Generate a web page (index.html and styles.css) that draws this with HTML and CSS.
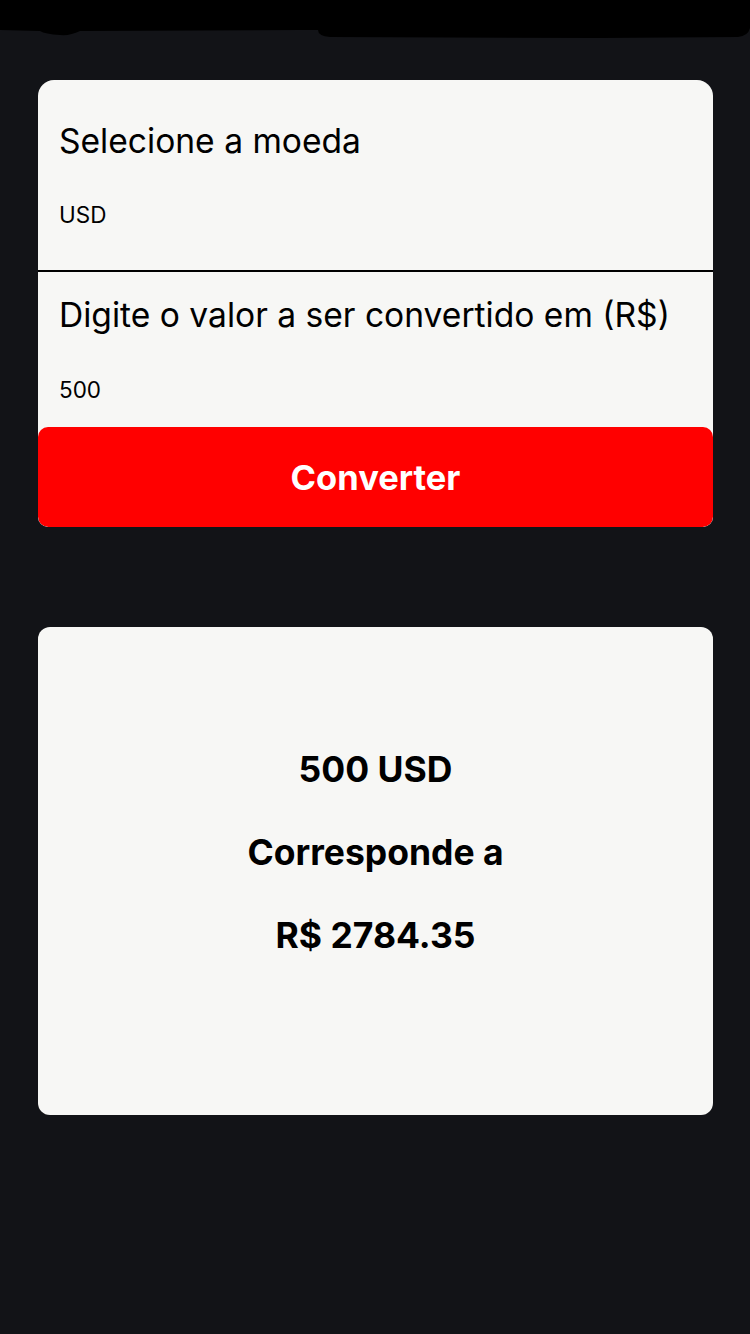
FILE: index.html
```html
<!DOCTYPE html>
<html lang="pt">
<head>
<meta charset="utf-8">
<title>Conversor</title>
<link rel="stylesheet" href="styles.css">
</head>
<body>
<div class="statusbar">
  <svg class="scribble" width="750" height="40" viewBox="0 0 750 40">
    <path d="M0 0 H750 V28 Q748 36 738 37 L600 38 L330 37 Q318 36 318 30 L300 30 L80 31 Q70 36 60 35 Q45 34 40 31 L0 30 Z" fill="#000"/>
  </svg>
</div>
<main class="content">
  <section class="form-card">
    <div class="field field-first">
      <div class="field-label">Selecione a moeda</div>
      <div class="field-value">USD</div>
    </div>
    <div class="field field-second">
      <div class="field-label">Digite o valor a ser convertido em (R$)</div>
      <div class="field-value">500</div>
    </div>
    <button class="convert-btn">Converter</button>
  </section>
  <section class="result-card">
    <div class="result-line">500 USD</div>
    <div class="result-line">Corresponde a</div>
    <div class="result-line">R$ 2784.35</div>
  </section>
</main>
</body>
</html>
```
FILE: styles.css
```css
html, body {
  margin: 0;
  padding: 0;
}
body {
  background: #121317;
  font-family: Inter, "Noto Sans", "Liberation Sans", sans-serif;
  color: #000;
  width: 750px;
  height: 1334px;
  overflow: hidden;
}
.statusbar {
  height: 80px;
}
.scribble {
  display: block;
}
.content {
  display: flex;
  flex-direction: column;
  gap: 100px;
  padding: 0 37px 0 38px;
}
.form-card {
  background: #f7f7f5;
  border-radius: 16px 16px 10px 10px;
  overflow: hidden;
  display: flex;
  flex-direction: column;
}
.field {
  padding-left: 21px;
}
.field-first {
  padding-top: 41px;
  padding-bottom: 40px;
  border-bottom: 2px solid #000;
}
.field-second {
  padding-top: 23px;
  padding-bottom: 22px;
}
.field-label {
  font-size: 33.6px;
  line-height: 40px;
  height: 40px;
  white-space: nowrap;
}
.field-value {
  font-size: 22.5px;
  line-height: 30px;
  height: 30px;
  margin-top: 39px;
}
.field-second .field-value {
  margin-top: 40px;
}
.convert-btn {
  display: block;
  height: 100px;
  border: none;
  border-radius: 10px;
  background: #ff0000;
  color: #fff;
  font-family: inherit;
  font-size: 34.5px;
  font-weight: 700;
  padding: 0;
  margin: 0;
}
.result-card {
  background: #f7f7f5;
  border-radius: 12px;
  height: 488px;
  box-sizing: border-box;
  padding-top: 123px;
  display: flex;
  flex-direction: column;
  align-items: center;
  gap: 43px;
}
.result-line {
  font-size: 35.5px;
  font-weight: 700;
  line-height: 40px;
  height: 40px;
}
```
